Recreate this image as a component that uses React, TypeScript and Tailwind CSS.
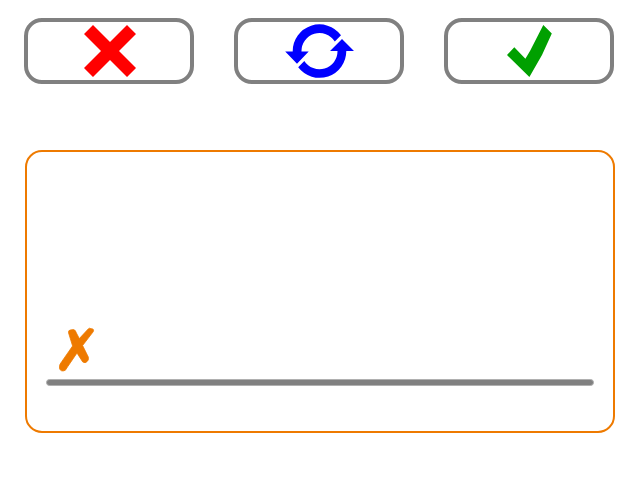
import type { ReactNode } from "react";

type ActionProps = { label: string; viewBox: string; children: ReactNode };

function ActionButton({ label, viewBox, children }: ActionProps) {
  return (
    <button
      aria-label={label}
      className="h-[66px] w-[170px] rounded-[18px] border-4 border-[#808080] bg-white"
    >
      <svg viewBox={viewBox} className="block h-[58px] w-[162px]">
        {children}
      </svg>
    </button>
  );
}

export default function App() {
  return (
    <main className="flex h-[480px] w-[640px] flex-col bg-white pt-[18px]">
      <header className="flex gap-10 pl-6">
        <ActionButton label="Cancel" viewBox="28 22 162 58">
          <path
            fill="#ff0000"
            d="M93 25 110 42 127 25 136 34 119 51 136 68 127 77 110 60 93 77 84 68 101 51 84 34Z"
          />
        </ActionButton>
        <ActionButton label="Restart" viewBox="238 22 162 58">
          <g fill="#0000ff">
            <path d="M292.7 51.2A26.8 26.8 0 0 1 341 35.2L334.8 41.6A18 18 0 0 0 301.5 51.5H308.7L297 63.8 285.2 51.5H292.7Z" />
            <path d="M346.3 51A26.8 26.8 0 0 1 298.2 67.3L304.3 60.9A18 18 0 0 0 337.5 51H330L342 39 354 51Z" />
          </g>
        </ActionButton>
        <ActionButton label="Accept" viewBox="448 22 162 58">
          <path
            fill="#00a000"
            d="M514.3 47.2 525.4 58.8 530 51 543.3 25 551.8 33.4 542 55 529.4 77 507 55Z"
          />
        </ActionButton>
      </header>

      <section className="mt-[66px] ml-[25px] flex h-[283px] w-[590px] flex-col rounded-[17px] border-2 border-[#ee7a00] pt-[170px] pl-[19px]">
        <svg viewBox="46 322 60 56" className="block h-14 w-[60px]">
          <path
            fill="#ee7a00"
            stroke="#ee7a00"
            strokeWidth="0.8"
            strokeLinejoin="round"
            d="M68.6 333Q68 330.1 70.6 329.9L73.6 329.6Q75.6 330 76.4 333L79.3 338.6 88.2 329Q89.3 327.6 91 328.7Q94.4 328.6 93.3 331.6L82.6 345.5 88.4 357.2Q88.9 360.2 87.1 361.5Q85.2 363.7 82.7 361.9L77 353 67.6 366.8 65.3 370.3Q60.9 372.2 59.5 368.6Q58.9 364.6 61.7 361.7L72.6 346Z"
          />
        </svg>
        <div className="mt-px h-[7px] w-[548px] rounded-full border border-[#b0b0b0] bg-[#808080]" />
      </section>
    </main>
  );
}
